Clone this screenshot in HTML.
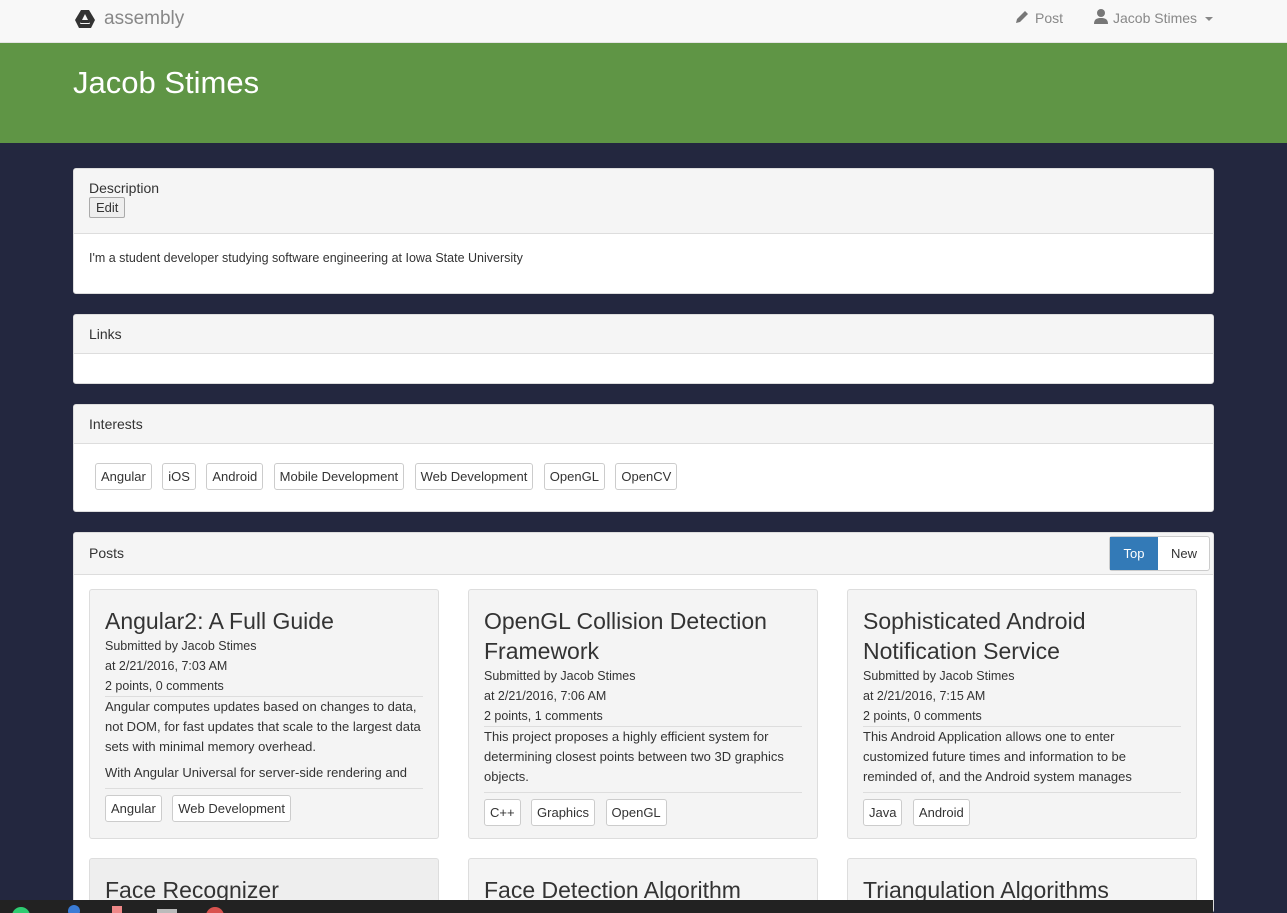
<!DOCTYPE html>
<html><head><meta charset="utf-8"><style>
*{box-sizing:border-box;margin:0;padding:0}
html{width:1287px;height:913px;overflow:hidden}
body{width:1287px;height:913px;overflow:hidden;background:#23273f;font-family:"Liberation Sans",sans-serif;color:#333;position:relative}
#wrap{position:absolute;left:0;top:0;width:1287px;height:913px;overflow:hidden}
.nav{position:absolute;left:0;top:0;width:1287px;height:43px;background:#f8f8f8;border-bottom:1px solid #e4e4e4}
.hdr{position:absolute;left:0;top:43px;width:1287px;height:100px;background:#5f9545}
.hdr h1{position:absolute;left:73px;top:22px;font-weight:normal;color:#fff;font-size:31px}
.panel{position:absolute;left:73px;width:1141px;background:#fff;border:1px solid #ddd;border-radius:3px;overflow:hidden}
.ph{background:#f5f5f5;border-bottom:1px solid #ddd;padding:0 15px;font-size:14px;color:#333}
.tag{display:inline-block;border:1px solid #ccc;border-radius:3px;background:#fff;font-size:13px;padding:5px 5px;margin-right:6px;color:#333;line-height:15px}
.card{position:absolute;width:350px;height:250px;background:#f4f4f4;border:1px solid #ddd;border-radius:3px;padding:16px 15px;overflow:hidden}
.card h2{font-weight:normal;font-size:23px;line-height:30px;color:#333;margin-bottom:0}
.card .m{font-size:12.5px;line-height:20px}
.card .d{border-top:1px solid #ddd;font-size:13px;line-height:20px;height:66px;overflow:hidden}
.card .t{border-top:1px solid #ddd;padding-top:6px;margin-top:0}
</style></head><body><div id="wrap">
<div class="nav">
<svg style="position:absolute;left:74px;top:9px" width="22" height="20" viewBox="0 0 22 20"><path d="M7 1h8l6 10-4 8H5L1 11z" fill="#333"/><path d="M11 5l-5 10h10z" fill="#f8f8f8"/><rect x="7" y="11" width="8" height="3" fill="#333"/></svg>
<span style="position:absolute;left:104px;top:8px;font-size:19px;color:#888">assembly</span>
<svg style="position:absolute;left:1015px;top:9px" width="15" height="15" viewBox="0 0 15 15"><path d="M1 14l1-4 8-8 3 3-8 8z" fill="#777"/></svg>
<span style="position:absolute;left:1035px;top:10px;font-size:14px;color:#888">Post</span>
<svg style="position:absolute;left:1093px;top:8px" width="16" height="16" viewBox="0 0 16 16"><circle cx="8" cy="5" r="4" fill="#777"/><path d="M1 16c0-5 3-6 7-6s7 1 7 6z" fill="#777"/></svg>
<span style="position:absolute;left:1113px;top:10px;font-size:14px;color:#888">Jacob Stimes</span>
<span style="position:absolute;left:1205px;top:17px;border-left:4px solid transparent;border-right:4px solid transparent;border-top:4px solid #888"></span>
</div>
<div class="hdr"><h1>Jacob Stimes</h1></div>

<div class="panel" style="top:168px;height:126px">
<div class="ph" style="height:65px;padding-top:11px">Description<br><span style="display:inline-block;margin-top:1px;border:1px solid #aaa;background:#eee;border-radius:2px;font-size:13px;padding:2px 6px">Edit</span></div>
<div style="padding:17px 15px;font-size:12.5px">I'm a student developer studying software engineering at Iowa State University</div>
</div>

<div class="panel" style="top:314px;height:70px"><div class="ph" style="height:39px;line-height:38px">Links</div></div>

<div class="panel" style="top:404px;height:108px"><div class="ph" style="height:39px;line-height:38px">Interests</div>
<div style="padding:19px 0 0 21px"><span class="tag">Angular</span> <span class="tag">iOS</span> <span class="tag">Android</span> <span class="tag">Mobile Development</span> <span class="tag">Web Development</span> <span class="tag">OpenGL</span> <span class="tag">OpenCV</span></div></div>

<div class="panel" style="top:532px;height:381px"><div class="ph" style="height:42px;line-height:41px">Posts</div>
<div style="position:absolute;left:1035px;top:3px;width:101px;height:35px;border:1px solid #ccc;border-radius:3px;background:#fff;font-size:13px">
<span style="position:absolute;left:0;top:0;width:48px;height:33px;background:#337ab7;color:#fff;line-height:33px;text-align:center">Top</span>
<span style="position:absolute;left:48px;top:0;width:52px;line-height:33px;text-align:center">New</span></div>
</div>

<div class="card" style="left:89px;top:589px"><h2>Angular2: A Full Guide</h2><div class="m">Submitted by Jacob Stimes<br>at 2/21/2016, 7:03 AM<br>2 points, 0 comments</div>
<div class="d" style="height:92px">Angular computes updates based on changes to data, not DOM, for fast updates that scale to the largest data sets with minimal memory overhead.<div style="margin-top:6px">With Angular Universal for server-side rendering and</div></div>
<div class="t"><span class="tag">Angular</span> <span class="tag">Web Development</span></div></div>

<div class="card" style="left:468px;top:589px"><h2>OpenGL Collision Detection Framework</h2><div class="m">Submitted by Jacob Stimes<br>at 2/21/2016, 7:06 AM<br>2 points, 1 comments</div>
<div class="d">This project proposes a highly efficient system for determining closest points between two 3D graphics objects.</div>
<div class="t"><span class="tag">C++</span> <span class="tag">Graphics</span> <span class="tag">OpenGL</span></div></div>

<div class="card" style="left:847px;top:589px"><h2>Sophisticated Android Notification Service</h2><div class="m">Submitted by Jacob Stimes<br>at 2/21/2016, 7:15 AM<br>2 points, 0 comments</div>
<div class="d">This Android Application allows one to enter customized future times and information to be reminded of, and the Android system manages</div>
<div class="t"><span class="tag">Java</span> <span class="tag">Android</span></div></div>

<div class="card" style="left:89px;top:858px;height:55px;background:#eee;border-bottom:none"><h2>Face Recognizer</h2></div>
<div class="card" style="left:468px;top:858px;height:55px;border-bottom:none"><h2>Face Detection Algorithm</h2></div>
<div class="card" style="left:847px;top:858px;height:55px;border-bottom:none"><h2>Triangulation Algorithms</h2></div>

<div style="position:absolute;left:0;top:900px;width:1213px;height:13px;background:#222;overflow:hidden">
<span style="position:absolute;left:12px;top:7px;width:18px;height:18px;border-radius:50%;background:#2ecc71"></span>
<span style="position:absolute;left:68px;top:5px;width:12px;height:12px;border-radius:50%;background:#3a7bd5"></span>
<span style="position:absolute;left:112px;top:6px;width:10px;height:10px;background:#e88"></span>
<span style="position:absolute;left:157px;top:9px;width:20px;height:6px;background:#bbb"></span>
<span style="position:absolute;left:206px;top:7px;width:18px;height:18px;border-radius:50%;background:#d9534f"></span>
</div>
</div></body></html>
